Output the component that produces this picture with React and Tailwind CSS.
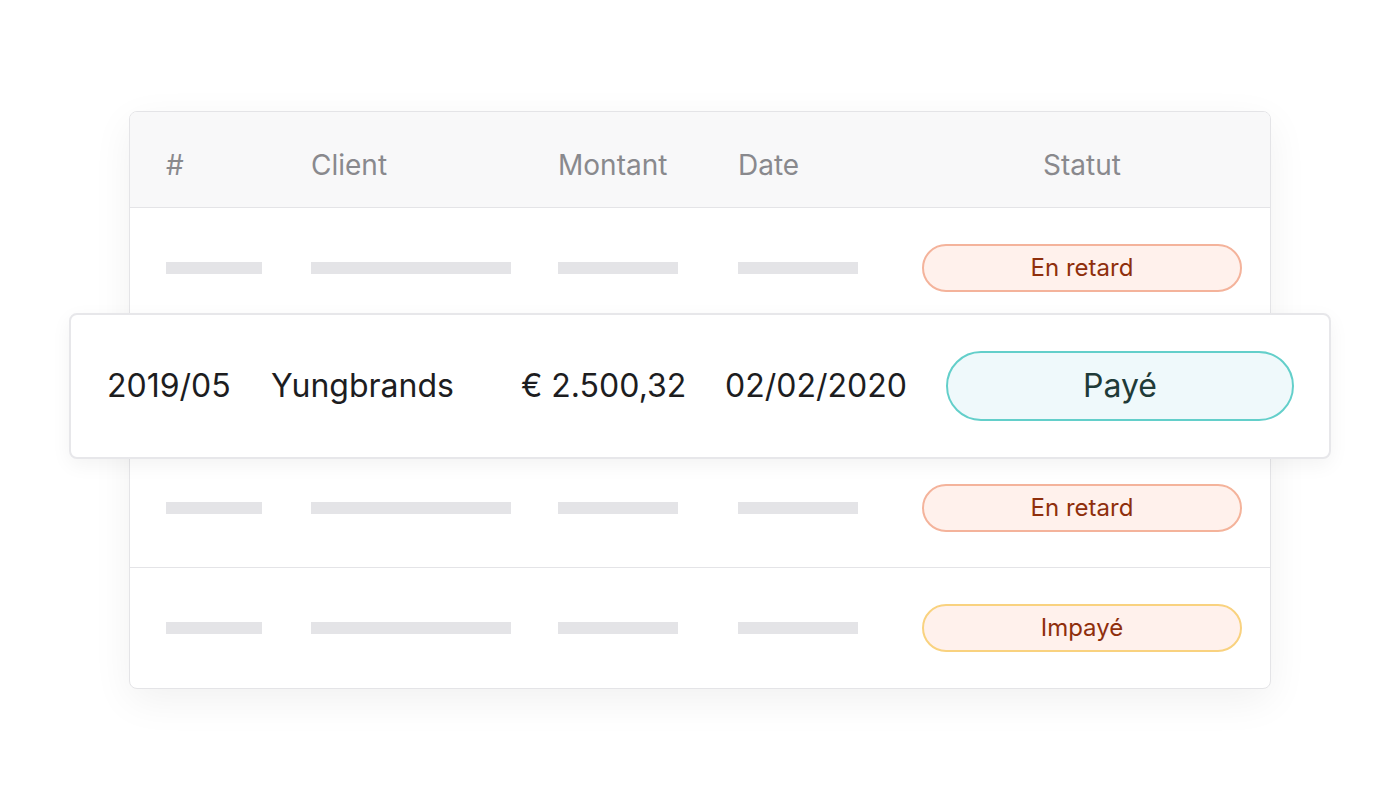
import React from 'react';

const rows = [
  { status: 'retard' },
  { status: 'hidden' },
  { status: 'retard' },
  { status: 'impaye' },
];

const badgeStyles = {
  retard: 'border-[#f4b39b] text-[#8f2f0c]',
  impaye: 'border-[#f9d27f] text-[#8f2f0c]',
};

const badgeLabel = {
  retard: 'En retard',
  impaye: 'Impayé',
};

const Bar = ({ w }) => <div className={`h-3 bg-[#e4e4e7] ${w}`} />;

const Badge = ({ status }) => (
  <div
    className={`w-[320px] h-12 rounded-full border-2 bg-[#fff1ec] flex items-center justify-center text-[24px] ${badgeStyles[status]}`}
  >
    {badgeLabel[status]}
  </div>
);

const App = () => {
  return (
    <div
      className="w-[1400px] h-[800px] bg-white pt-[111px] pl-[129px]"
      style={{ fontFamily: 'Inter, "Noto Sans", sans-serif' }}
    >
      <div className="relative w-[1142px]">
        <div className="rounded-lg border border-[#e4e4e7] bg-white overflow-hidden shadow-[0_12px_40px_rgba(0,0,0,0.06)]">
          {/* header */}
          <div className="flex items-center h-24 pt-[10px] bg-[#f8f8f9] border-b border-[#e4e4e7] pl-[36px] pr-[28px] text-[28px] text-[#89898d]">
            <div className="w-[145px]">#</div>
            <div className="w-[247px]">Client</div>
            <div className="w-[180px]">Montant</div>
            <div className="w-[184px]">Date</div>
            <div className="w-[320px] text-center">Statut</div>
          </div>

          {rows.map((row, i) => (
            <div
              key={i}
              className={`flex items-center h-[120px] pl-[36px] pr-[28px] ${i < rows.length - 1 ? 'border-b border-[#e4e4e7]' : ''}`}
            >
              <div className="w-[145px]"><Bar w="w-24" /></div>
              <div className="w-[247px]"><Bar w="w-[200px]" /></div>
              <div className="w-[180px]"><Bar w="w-[120px]" /></div>
              <div className="w-[184px]"><Bar w="w-[120px]" /></div>
              {row.status !== 'hidden' && <Badge status={row.status} />}
            </div>
          ))}
        </div>

        {/* highlighted row */}
        <div className="absolute top-[202px] -left-[60px] w-[1262px] h-[146px] rounded-lg border-2 border-[#e7e7ea] bg-white shadow-[0_6px_20px_rgba(0,0,0,0.05)] flex items-center pl-[36px] pr-[35px] text-[32px] text-[#1d1d1f]">
          <div className="w-[164px]">2019/05</div>
          <div className="w-[250px]">Yungbrands</div>
          <div className="w-[204px]">€ 2.500,32</div>
          <div className="w-[221px]">02/02/2020</div>
          <div className="w-[348px] h-[70px] rounded-full border-2 border-[#63cfca] bg-[#eff9fb] flex items-center justify-center text-[32px] text-[#1f3b38]">
            Payé
          </div>
        </div>
      </div>
    </div>
  );
};

export default App;
